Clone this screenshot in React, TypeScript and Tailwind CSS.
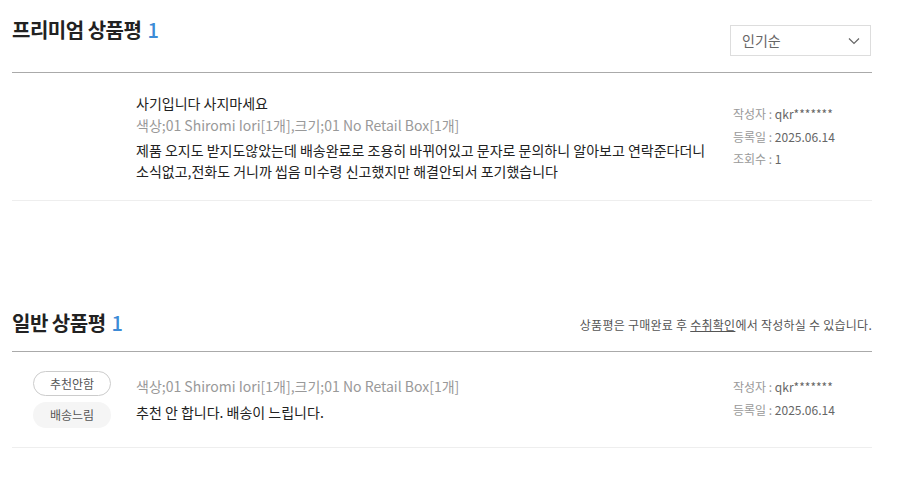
import React from "react";

const font = { fontFamily: '"Noto Sans CJK KR", "Noto Sans", sans-serif' };

function Chevron() {
  return (
    <svg width="12" height="8" viewBox="0 0 12 8" fill="none">
      <path d="M1 1.5 L6 6.5 L11 1.5" stroke="#666" strokeWidth="1.2" />
    </svg>
  );
}

function Meta({ rows }: { rows: [string, string][] }) {
  return (
    <div className="w-[139px] shrink-0 text-[12px]">
      {rows.map(([k, v]) => (
        <div key={k} className="leading-[22.5px] text-[#999]">
          {k} : <span className="text-[#666]">{v}</span>
        </div>
      ))}
    </div>
  );
}

export default function App() {
  return (
    <div className="w-[898px] h-[497px] bg-white overflow-hidden" style={font}>
      <div className="mx-[12px] w-[860px]">
        {/* Premium header */}
        <div className="h-[73px] flex justify-between items-start border-b border-[#aaaaaa]">
          <div className="mt-[18px] text-[20px] leading-[24px] font-semibold text-[#222] tracking-[-0.5px]">
            프리미엄 상품평 <span className="ml-[2px] text-[#3d8bd6] font-medium">1</span>
          </div>
          <div className="mt-[25px] mr-[1px] w-[141px] h-[31px] border border-[#dddddd] flex items-center justify-between pl-[11px] pr-[10px]">
            <span className="text-[14px] text-[#666]">인기순</span>
            <Chevron />
          </div>
        </div>
        {/* Premium row */}
        <div className="flex border-b border-[#eeeeee] pb-[18px]">
          <div className="pl-[124px] pt-[20px] w-[721px]">
            <div className="text-[14px] leading-[20px] text-[#222]">사기입니다 사지마세요</div>
            <div className="mt-[2px] text-[14px] leading-[20px] text-[#999]">
              색상;01 Shiromi Iori[1개],크기;01 No Retail Box[1개]
            </div>
            <div className="mt-[5px] text-[14px] leading-[21px] text-[#222] w-[575px] break-keep">
              제품 오지도 받지도않았는데 배송완료로 조용히 바뀌어있고 문자로 문의하니 알아보고 연락준다더니 소식없고,전화도 거니까 씹음 미수령 신고했지만 해결안되서 포기했습니다
            </div>
          </div>
          <div className="pt-[30px]">
            <Meta
              rows={[
                ["작성자", "qkr*******"],
                ["등록일", "2025.06.14"],
                ["조회수", "1"],
              ]}
            />
          </div>
        </div>

        {/* General header */}
        <div className="pt-[110px] pb-[16px] flex items-center justify-between border-b border-[#aaaaaa]">
          <div className="text-[20px] leading-[24px] font-semibold text-[#222] tracking-[-0.5px]">
            일반 상품평 <span className="ml-[2px] text-[#3d8bd6] font-medium">1</span>
          </div>
          <div className="mt-[4px] text-[12px] leading-[18px] text-[#555] tracking-[0.25px]">
            상품평은 구매완료 후 <span className="underline">수취확인</span>에서 작성하실 수 있습니다.
          </div>
        </div>
        {/* General row */}
        <div className="flex border-b border-[#eeeeee] pb-[19px]">
          <div className="pl-[21px] pt-[19px] w-[124px] shrink-0 flex flex-col gap-[6px]">
            <div className="w-[78px] h-[25px] rounded-full border border-[#cccccc] flex items-center justify-center text-[12px] text-[#555]">
              추천안함
            </div>
            <div className="w-[78px] h-[26px] rounded-full bg-[#f5f5f5] flex items-center justify-center text-[12px] text-[#555]">
              배송느림
            </div>
          </div>
          <div className="pt-[24px] w-[597px]">
            <div className="text-[14px] leading-[20px] text-[#999]">
              색상;01 Shiromi Iori[1개],크기;01 No Retail Box[1개]
            </div>
            <div className="mt-[6px] text-[14px] leading-[20px] text-[#222]">
              추천 안 합니다. 배송이 느립니다.
            </div>
          </div>
          <div className="pt-[24px]">
            <Meta
              rows={[
                ["작성자", "qkr*******"],
                ["등록일", "2025.06.14"],
              ]}
            />
          </div>
        </div>
      </div>
    </div>
  );
}
